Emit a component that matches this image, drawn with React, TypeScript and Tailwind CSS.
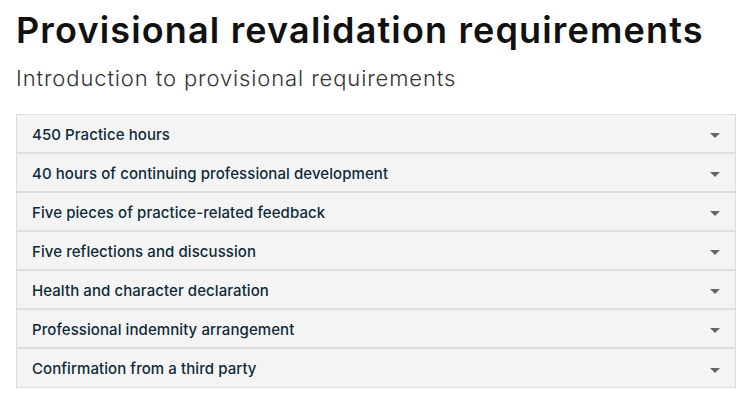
const items = [
  '450 Practice hours',
  '40 hours of continuing professional development',
  'Five pieces of practice-related feedback',
  'Five reflections and discussion',
  'Health and character declaration',
  'Professional indemnity arrangement',
  'Confirmation from a third party',
];

export default function App() {
  return (
    <main className="min-h-screen bg-white px-4 pt-[8px]" style={{ fontFamily: 'Inter, "Liberation Sans", sans-serif' }}>
      <h1 className="whitespace-nowrap text-[36px] leading-[44px] font-semibold text-[#111] tracking-[0.032em]">
        Provisional revalidation requirements
      </h1>
      <p className="mt-[12px] whitespace-nowrap text-[22px] leading-[28px] font-light text-[#333] tracking-[0.04em]">
        Introduction to provisional requirements
      </p>

      {/* Accordion */}
      <div className="mt-[22px] w-[720px] border border-[#dedede]">
        {items.map((label, i) => (
          <button
            key={label}
            className={`flex w-full items-center justify-between bg-[#f4f4f4] pl-[15px] pr-[15px] pt-[3px] text-left ${
              i < items.length - 1 ? 'h-[39px] border-b-2 border-[#dedede]' : 'h-[38px]'
            }`}
          >
            <span className="text-[15px] font-medium text-[#0f2b3a] tracking-[0.005em]">{label}</span>
            <svg width="10" height="6" viewBox="0 0 10 6" className="mt-[2px]">
              <path d="M0 0 L10 0 L5 5 Z" fill="#666" />
            </svg>
          </button>
        ))}
      </div>
    </main>
  );
}
